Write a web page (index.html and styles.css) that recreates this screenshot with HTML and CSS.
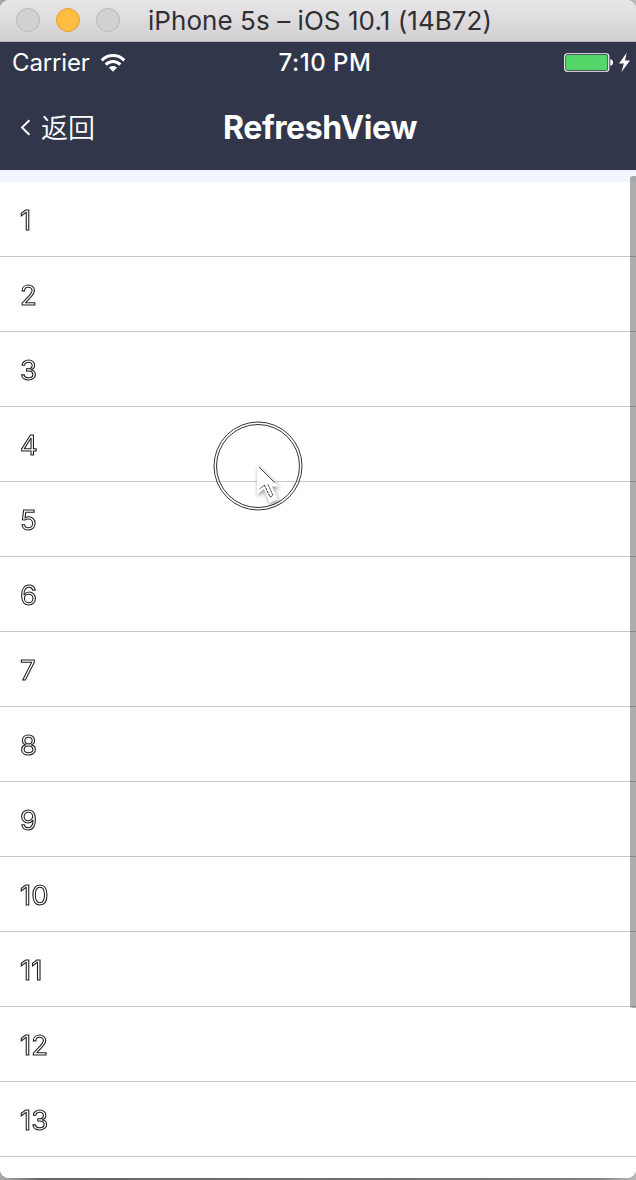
FILE: index.html
```html
<!DOCTYPE html>
<html lang="zh">
<head>
<meta charset="utf-8">
<title>RefreshView</title>
<link rel="stylesheet" href="styles.css">
</head>
<body>
<div class="window">
  <header class="titlebar">
    <span class="light"></span><span class="light light-on"></span><span class="light"></span>
    <span class="window-title">iPhone 5s – iOS 10.1 (14B72)</span>
  </header>
  <div class="statusbar">
    <div class="status-left">
      <span class="carrier">Carrier</span>
      <svg class="wifi" width="26" height="20" viewBox="0 0 26 20" fill="none" stroke="#fff" stroke-width="3">
        <path d="M1.700 7.400C8 .9 18 .9 24.300 7.400"/>
        <path d="M5.700 11.600C9.700 7.500 16.300 7.500 20.300 11.600"/>
        <path d="M13 18.800L8.900 14.600C11.200 12.300 14.800 12.300 17.100 14.600Z" fill="#fff" stroke="none"/>
      </svg>
    </div>
    <span class="time">7:10 PM</span>
    <div class="status-right">
      <svg width="68" height="22" viewBox="0 0 68 22">
        <rect x=".75" y="1.750" width="44" height="17.500" rx="2.500" fill="#14202c" stroke="#fff" stroke-width="1.200"/>
        <rect x="2" y="3" width="41.500" height="15" rx="1.200" fill="#53d769"/>
        <path d="M46.300 7.200Q49 7.500 49 10.500T46.300 13.800Z" fill="#fff"/>
        <path d="M62.700.7L55 11.600H59.800L57.500 20L66 8.500H61Z" fill="#fff"/>
      </svg>
    </div>
  </div>
  <nav class="navbar">
    <div class="back">
      <svg width="11" height="18" viewBox="0 0 11 18" fill="none" stroke="#fff" stroke-width="1.900"><path d="M9.400 2.200L2 9.500L9.400 16.800"/></svg>
      <span class="back-label">返回</span>
    </div>
    <h1 class="nav-title">RefreshView</h1>
  </nav>
  <main class="content">
    <ul class="list">
      <li class="row">1</li><li class="row">2</li><li class="row">3</li><li class="row">4</li>
      <li class="row">5</li><li class="row">6</li><li class="row">7</li><li class="row">8</li>
      <li class="row">9</li><li class="row">10</li><li class="row">11</li><li class="row">12</li>
      <li class="row">13</li>
    </ul>
    <div class="scrollbar"></div>
    <svg class="pointer" width="100" height="104" viewBox="0 0 100 104" fill="none">
      <circle cx="50" cy="50" r="44" stroke="#333" stroke-width="1"/>
      <circle cx="50" cy="50" r="41.500" stroke="#333" stroke-width="1"/>
      <g class="cursor">
        <path d="M49 48V78.500L56 73L61.500 87L70 83.500L64 70.500H71Z" fill="#fff"/>
      </g>
      <path d="M51 51L66.500 66.500" stroke="#292b52" stroke-width=".9"/>
      <path d="M51.500 73L56.500 69" stroke="#666" stroke-width=".9"/>
      <path d="M56.500 69L62 81L65 79.500L60 68.500" stroke="#333" stroke-width="1" stroke-dasharray="2.500 .8"/>
    </svg>
  </main>
</div>
</body>
</html>
```
FILE: styles.css
```css
* { box-sizing: border-box; }
body {
  margin: 0;
  height: 1180px;
  overflow: hidden;
  background: linear-gradient(90deg, #aaa 0, #666 40px, #747274 480px, #858385 600px, #bbb 636px);
  font-family: Inter, "Noto Sans CJK SC", sans-serif;
}
.window {
  height: 1178px;
  display: flex;
  flex-direction: column;
  overflow: hidden;
  background: #fff;
  border-radius: 9px;
}
.titlebar {
  flex: none;
  height: 42px;
  display: flex;
  align-items: center;
  gap: 16px;
  padding: 0 0 1px 16px;
  background: linear-gradient(#e8e6e8, #d2d0d2);
  border-bottom: 1px solid #b3b1b3;
}
.light {
  width: 24px;
  height: 24px;
  border: 1px solid #b8b6b8;
  border-radius: 50%;
  background: #d2d0d3;
}
.light-on { background: #ffbd44; border-color: #dea035; }
.window-title {
  margin-left: 12px;
  padding-top: 2px;
  color: #302f32;
  font-size: 26px;
  line-height: 32px;
  letter-spacing: 0.06px;
  white-space: nowrap;
}
.statusbar, .navbar {
  flex: none;
  display: grid;
  grid-template-columns: 1fr auto 1fr;
  align-items: center;
  background: #31364a;
  color: #fff;
}
.statusbar { height: 42px; padding: 0 4px 0 12px; }
.status-left { display: flex; align-items: center; gap: 10px; }
.carrier { font-size: 24px; line-height: 30px; letter-spacing: -0.15px; font-weight: 400; }
.time { font-size: 24px; line-height: 30px; font-weight: 500; letter-spacing: 0.5px; margin-left: 6px; }
.status-right { display: flex; justify-content: flex-end; }
.navbar { height: 86px; padding: 0 16px 0 20px; }
.back { display: flex; align-items: center; gap: 10px; font-size: 27px; line-height: 40px; }
.back-label { padding-bottom: 1px; font-family: "Noto Sans CJK SC", sans-serif; font-weight: 350; }
.nav-title { margin: 0; padding-top: 2px; font-size: 32px; line-height: 40px; font-weight: 700; letter-spacing: -0.4px; }
.content { position: relative; flex: 1; padding-top: 12px; background: #f2f5fd; }
.list { height: 100%; margin: 0; padding: 0; list-style: none; background: #fff; }
.row {
  height: 75px;
  padding: 1px 0 0 20px;
  border-bottom: 1px solid #c8c7cc;
  color: #fff;
  font-size: 27.500px;
  line-height: 75px;
  font-weight: 400;
  -webkit-text-stroke: 1.1px #222;
  will-change: opacity;
}
.scrollbar {
  position: absolute;
  top: 6px;
  right: 0;
  width: 6px;
  height: 832px;
  border-radius: 3px 0 0 3px;
  background: rgba(0, 0, 0, 0.32);
}
.pointer { position: absolute; left: 208px; top: 246px; }
.cursor { filter: drop-shadow(1px 2px 2px rgba(0, 0, 0, 0.4)); }
```
